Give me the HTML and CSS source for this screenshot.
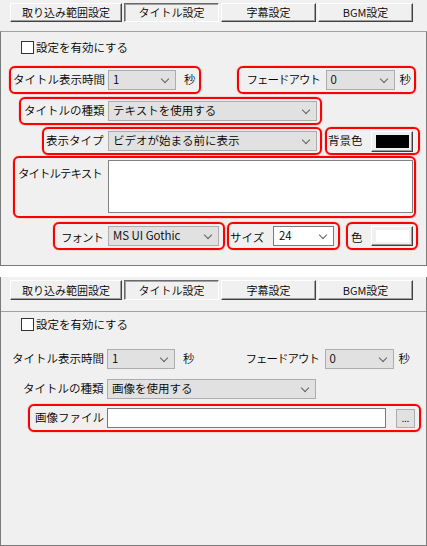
FILE: index.html
```html
<!DOCTYPE html>
<html>
	<head>
		<meta charset="utf-8">
		<title>タイトル設定</title>
		<link rel="stylesheet" href="styles.css">
	</head>
	<body>
		<!-- テキストを使用する場合 -->
		<div class="dialog">
			<div class="tabs">
				<div class="tab wide">取り込み範囲設定</div>
				<div class="tab active">タイトル設定</div>
				<div class="tab">字幕設定</div>
				<div class="tab">BGM設定</div>
			</div>
			<div class="sheet">
				<div class="check"><span class="box"></span>設定を有効にする</div>
				<div class="row row-1">
					<div class="grp mark g-time">
						<span class="lbl">タイトル表示時間</span>
						<div class="combo c-time">1</div>
						<span class="unit">秒</span>
					</div>
					<div class="grp mark g-fade">
						<span class="lbl kana">フェードアウト</span>
						<div class="combo c-fade">0</div>
						<span class="unit">秒</span>
					</div>
				</div>
				<div class="row row-2">
					<div class="grp mark g-kind">
						<span class="lbl">タイトルの種類</span>
						<div class="combo c-long">テキストを使用する</div>
					</div>
				</div>
				<div class="row row-3">
					<div class="grp mark g-type">
						<span class="lbl">表示タイプ</span>
						<div class="combo c-long">ビデオが始まる前に表示</div>
					</div>
					<div class="grp mark g-bg">
						<span class="lbl">背景色</span>
						<div class="swatch"><span class="fill black"></span></div>
					</div>
				</div>
				<div class="row row-4">
					<div class="grp mark g-text">
						<span class="lbl kana">タイトルテキスト</span>
						<div class="memo"></div>
					</div>
				</div>
				<div class="row row-5">
					<div class="grp mark g-font">
						<span class="lbl kana">フォント</span>
						<div class="combo c-font">MS UI Gothic</div>
					</div>
					<div class="grp mark g-size">
						<span class="lbl">サイズ</span>
						<div class="combo edit c-size">24</div>
					</div>
					<div class="grp mark g-color">
						<span class="lbl">色</span>
						<div class="swatch small"><span class="fill white"></span></div>
					</div>
				</div>
			</div>
		</div>

		<!-- 画像を使用する場合 -->
		<div class="dialog alt">
			<div class="tabs">
				<div class="tab wide">取り込み範囲設定</div>
				<div class="tab active">タイトル設定</div>
				<div class="tab">字幕設定</div>
				<div class="tab">BGM設定</div>
			</div>
			<div class="sheet">
				<div class="check"><span class="box"></span>設定を有効にする</div>
				<div class="row row-1">
					<div class="grp g-time">
						<span class="lbl">タイトル表示時間</span>
						<div class="combo c-time">1</div>
						<span class="unit">秒</span>
					</div>
					<div class="grp g-fade">
						<span class="lbl kana">フェードアウト</span>
						<div class="combo c-fade">0</div>
						<span class="unit">秒</span>
					</div>
				</div>
				<div class="row row-2">
					<div class="grp g-kind">
						<span class="lbl">タイトルの種類</span>
						<div class="combo c-long">画像を使用する</div>
					</div>
				</div>
				<div class="row row-3">
					<div class="grp mark g-file">
						<span class="lbl">画像ファイル</span>
						<div class="path"></div>
						<div class="browse">...</div>
					</div>
				</div>
			</div>
		</div>
	</body>
</html>
```

FILE: styles.css
```css
* {
	margin: 0;
	padding: 0;
	box-sizing: border-box;
}

body {
	background: #fff;
	color: #000;
	font-family: "Noto Sans CJK JP", "Noto Sans", sans-serif;
	font-size: 11px;
	font-weight: 350;
	line-height: 1;
}

.dialog {
	width: 427px;
	background: #f0f0f0;
}

.dialog + .dialog {
	margin-top: 11px;
}

.dialog.alt {
	border-left: 1px solid #7a7a7a;
	border-right: 1px solid #7a7a7a;
}

/* タブ */
.tabs {
	display: flex;
	gap: 2px;
	height: 31px;
	padding: 3px 0 0 10px;
}

.alt .tabs {
	height: 34px;
	padding-left: 9px;
}

.tab {
	width: 95px;
	height: 19px;
	display: flex;
	align-items: center;
	justify-content: center;
	border: 1px solid;
	border-color: #fff #404040 #404040 #fff;
	box-shadow: inset -1px -1px #a0a0a0;
}

.alt .tab {
	height: 20px;
}

.tab.wide {
	width: 112px;
}

.tab.active {
	border-color: #696969 #fff #fff #696969;
	box-shadow: inset 1px 1px #a0a0a0;
}

.sheet {
	height: 235px;
	border: 1px solid #7a7a7a;
	border-top-color: #a0a0a0;
}

.alt .sheet {
	border-left: none;
	border-right: none;
}

/* チェックボックス */
.check {
	display: flex;
	align-items: center;
	gap: 2px;
	height: 13px;
	margin: 9px 0 0 20px;
	font-size: 11.5px;
}

.alt .check {
	margin-top: 6px;
}

.check .box {
	width: 13px;
	height: 13px;
	background: #fff;
	border: 1px solid #333;
}

/* 行 */
.row {
	display: flex;
	align-items: center;
}

.alt .row {
	margin-left: -1px;
}

.row-1 { margin-top: 12px; }
.row-2 { margin-top: 3px; }
.row-3 { margin-top: 2px; }
.row-4 { margin-top: 1px; }
.row-5 { margin-top: 4px; }

.alt .row-1 { margin-top: 14px; }
.alt .row-2 { margin-top: 2px; }
.alt .row-3 { margin-top: 1px; }

.grp {
	display: flex;
	align-items: center;
	height: 28px;
	border: 2px solid transparent;
	border-radius: 6px;
}

.grp.mark {
	border-color: #f00;
	box-shadow: 0 0 1px #f00;
}

.lbl {
	flex: none;
	white-space: nowrap;
	font-size: 11.5px;
}

.lbl.kana {
	letter-spacing: -1px;
}

.unit {
	flex: none;
	font-size: 11.5px;
}

/* 入力部品 */
.combo {
	position: relative;
	flex: none;
	height: 20px;
	display: flex;
	align-items: center;
	padding-left: 4px;
	background: #e1e1e1;
	border: 1px solid #adadad;
	white-space: nowrap;
	font-size: 11.5px;
}

.combo::after {
	content: "";
	position: absolute;
	right: 7px;
	top: 5px;
	width: 5px;
	height: 5px;
	border-right: 1px solid #606060;
	border-bottom: 1px solid #606060;
	transform: rotate(45deg);
}

.combo.edit {
	background: #fff;
	border-color: #7a7a7a;
	padding-left: 5px;
}

.swatch {
	flex: none;
	width: 42px;
	height: 21px;
	padding: 3px 3px 3px 4px;
	border: 1px solid;
	border-color: #fff #404040 #404040 #fff;
	box-shadow: inset -1px -1px #a0a0a0;
}

.swatch.small {
	height: 20px;
}

.swatch .fill {
	display: block;
	height: 100%;
}

.fill.black {
	background: #000;
}

.fill.white {
	background: #fff;
}

.memo {
	flex: none;
	width: 305px;
	height: 53px;
	background: #fff;
	border: 1px solid #828282;
}

.path {
	flex: none;
	width: 279px;
	height: 20px;
	background: #fff;
	border: 1px solid #7a7a7a;
}

.browse {
	flex: none;
	width: 19px;
	height: 19px;
	margin-left: 10px;
	display: flex;
	align-items: center;
	justify-content: center;
	font-size: 9px;
	background: #e1e1e1;
	border: 1px solid #adadad;
}

/* グループごとの位置と幅 */
.g-time { margin-left: 8px; padding: 0 3px 0 2px; }
.g-time .lbl { width: 95px; }
.g-time .unit { margin-left: 8px; }
.c-time { width: 68px; }

.g-fade { margin-left: 36px; padding: 0 3px 0 8px; }
.g-fade .lbl { width: 79px; }
.g-fade .unit { margin-left: 5px; }
.c-fade { width: 69px; }

.g-kind { margin-left: 18px; padding: 0 3px; }
.g-kind .lbl { width: 84px; }
.c-long { width: 209px; }

.g-type { margin-left: 41px; padding: 0 3px 0 2px; }
.g-type .lbl { width: 62px; }

.g-bg { margin-left: 3px; padding: 0 5px 0 1px; }
.g-bg .lbl { width: 43px; }

.g-text {
	margin-left: 12px;
	height: 62px;
	align-items: flex-start;
	padding: 2px 1px 0 3px;
}
.g-text .lbl { width: 90px; padding-top: 8px; }

.g-font { margin-left: 52px; padding: 0 4px 0 6px; }
.g-font .lbl { width: 47px; padding-top: 4px; }
.c-font { width: 111px; }

.g-size { margin-left: 2px; padding: 0 4px 0 1px; }
.g-size .lbl { width: 43px; padding-top: 3px; }
.c-size { width: 61px; }

.g-color { margin-left: 6px; padding: 0 3px; }
.g-color .lbl { width: 20px; padding-top: 3px; }

.g-file { margin-left: 28px; padding: 0 4px 0 5px; }
.g-file .lbl { width: 72px; }
```
